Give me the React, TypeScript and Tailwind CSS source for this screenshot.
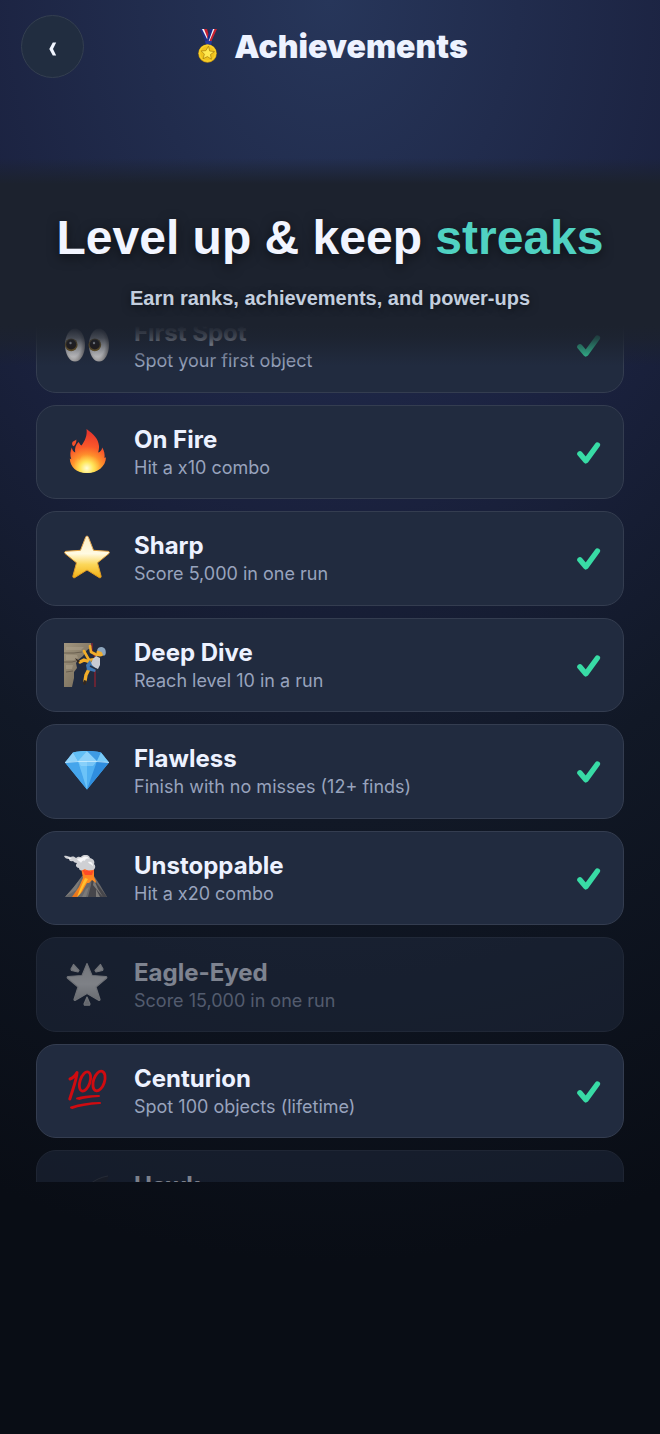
import type { ReactNode } from "react";

function Medal() {
  return (
    <svg viewBox="0 0 34 36" className="h-9 w-[34px]" aria-hidden="true">
      <path d="M8 0h5l7 11-3 3h-3z" fill="#1d2f86" />
      <path d="M10 0h3l5 11-1 3z" fill="#f4f6fb" />
      <path d="M12 0h3l3 10-1 3z" fill="#c9202f" />
      <path d="M24 0h-5l-4 14h3z" fill="#f4f6fb" />
      <path d="M21 0h-3l-3 11 1 3z" fill="#1d2f86" />
      <path d="M25 0h-2.500l-5.500 13h2z" fill="#c9202f" />
      <path d="M13 12h7l-1 4h-5z" fill="#263a9c" />
      <circle cx="15.500" cy="24.500" r="9.300" fill="#c99612" />
      <circle cx="15.500" cy="24.200" r="8.700" fill="#f8d12c" />
      <circle cx="15.500" cy="24.300" r="7.200" fill="#efc21c" />
      <path d="m16.500 17.200 1.200 4.800 4.800.6-4 2.900.9 4.700-4-2.600-4.400 2.200 1.400-4.600-3.300-3.300 4.700-.2z" fill="#ffe850" stroke="#a87c0c" strokeWidth=".7" />
    </svg>
  );
}

function Eyes() {
  return (
    <svg viewBox="0 0 46 46" className="size-full" aria-hidden="true">
      <defs>
        <radialGradient id="eyeWhite" cx=".42" cy=".48" r=".58">
          <stop offset="0" stopColor="#fff" />
          <stop offset=".65" stopColor="#eceae9" />
          <stop offset="1" stopColor="#8b8786" />
        </radialGradient>
      </defs>
      <ellipse cx="11" cy="23" rx="10" ry="16.500" fill="url(#eyeWhite)" />
      <ellipse cx="35" cy="23" rx="10" ry="16.500" fill="url(#eyeWhite)" />
      <circle cx="7.200" cy="22.800" r="6.400" fill="#8c6a22" />
      <circle cx="7.200" cy="22.500" r="5" fill="#23160f" />
      <circle cx="30.800" cy="22.800" r="6.400" fill="#8c6a22" />
      <circle cx="30.800" cy="22.500" r="5" fill="#23160f" />
      <circle cx="6.500" cy="21" r="1.200" fill="#fff" />
      <circle cx="30" cy="21" r="1.200" fill="#fff" />
    </svg>
  );
}

function Fire() {
  return (
    <svg viewBox="0 0 46 46" className="size-full" aria-hidden="true">
      <defs>
        <radialGradient id="flame" gradientUnits="userSpaceOnUse" cx="23" cy="42" r="38">
          <stop offset="0" stopColor="#fff6a0" />
          <stop offset=".2" stopColor="#ffd84a" />
          <stop offset=".42" stopColor="#ff922c" />
          <stop offset=".65" stopColor="#f9582a" />
          <stop offset="1" stopColor="#e8382c" />
        </radialGradient>
        <radialGradient id="flameCore" cx=".5" cy=".8" r=".6">
          <stop offset="0" stopColor="#fffdd8" />
          <stop offset=".45" stopColor="#ffe65a" />
          <stop offset="1" stopColor="#ffab36" stopOpacity="0" />
        </radialGradient>
      </defs>
      <path d="M22.500 0c7 5 12 10 12.500 17 .2 2.500-.4 4.500-.8 6.500 2-.5 3.600-2.200 4-5 2 3 2.800 7 2.300 10.500l1.500-.8c-.2 9.300-8.500 15.800-19 15.800S6 38 5.800 29.500l1.500.8c-1.600-4.300-1-8.300.5-11.800.5 2.500 1.600 4.300 3.400 5-.7-4.500.5-7.500 3.300-10.500 1.200 1.500 1.800 3 3 3.500 3.500-4.500 6-10.500 5-16.500z" fill="url(#flame)" />
      <path d="M12.300 10.500c.5 3-.9 5-2.600 6.800C8 16.500 7.500 14.500 8.700 12.800c1-1 2.500-1.300 3.600-2.300z" fill="#f4502b" />
      <path d="M23 20c1.500 4 3 6 5 8 1-1 2-2.500 2-4 3 3.500 5.500 7 5 11 0 5-5 9-12 9s-12-3.500-12.500-9c0-3 1-5 2.500-7 .8 1.500 1.500 2.500 3 3 .5-4.500 6-7 7-11z" fill="url(#flameCore)" />
    </svg>
  );
}

function Star() {
  return (
    <svg viewBox="0 0 46 46" className="size-full" aria-hidden="true">
      <defs>
        <linearGradient id="starEdge" x1="0" y1="0" x2="0" y2="1">
          <stop offset="0" stopColor="#e2a85c" />
          <stop offset="1" stopColor="#e19a1c" />
        </linearGradient>
        <linearGradient id="starFill" x1="0" y1="0" x2="0" y2="1">
          <stop offset="0" stopColor="#fff0c4" />
          <stop offset=".42" stopColor="#fffae2" />
          <stop offset=".68" stopColor="#fcd75a" />
          <stop offset="1" stopColor="#f2b014" />
        </linearGradient>
      </defs>
      <path d="M21.700 2c.5-1.200 2.100-1.200 2.600 0l5.200 13.300 14.600 1c1.300.1 1.700 1.500.8 2.300L33.500 27.800l3.600 13.300c.3 1.300-.8 2.200-1.900 1.500L23 35l-12.200 7.600c-1.100.7-2.200-.2-1.900-1.500l3.600-13.300L1.100 18.600c-.9-.8-.5-2.200.8-2.300l14.600-1z" fill="url(#starFill)" stroke="url(#starEdge)" strokeLinejoin="round" strokeWidth="1" />
    </svg>
  );
}

function Climber() {
  return (
    <svg viewBox="0 0 46 46" className="size-full" aria-hidden="true">
      <defs>
        <linearGradient id="rock" x1="0" y1="0" x2="1" y2="1">
          <stop offset="0" stopColor="#a2967f" />
          <stop offset="1" stopColor="#6e6453" />
        </linearGradient>
      </defs>
      <path d="M0 1h27l1 4-5 3-4 6-5 4-2 3 1 5-3 4 0 6-2 9H0z" fill="url(#rock)" />
      <path d="M2 5h18l-3 3H2zM2 13h11l1 3-4 2H2zM2 23h7l-1 4H2z" fill="#b0a48e" fillOpacity=".5" />
      <path d="M0 11h10l8-1M0 20h8l4-1M2 30l7-1" stroke="#5f5648" strokeWidth=".8" fill="none" />
      <path d="M28 1v8l3 6M31 27v18" stroke="#8e2330" strokeWidth="1.300" fill="none" />
      <path d="m33 13-6-3-1-6M31 17l-6 1-5-9" stroke="#f2ae29" strokeWidth="2.600" strokeLinecap="round" strokeLinejoin="round" fill="none" />
      <path d="m26 20-6-2-4 2M25 27l-3 6-1 6" stroke="#f2ae29" strokeWidth="3.400" strokeLinejoin="round" strokeLinecap="round" fill="none" />
      <path d="m11 16 5 3-2 2zM20 38l3 1-2 4-2-1z" fill="#33271f" />
      <path d="m32 14 4 2v7l-2 4-7-1-1-3 3-6z" fill="#c8cbd2" />
      <path d="m26 18 2 5 4 4-1 3-8-2-1-5z" fill="#3f78b4" />
      <path d="m26 24 8 4v3" stroke="#273141" strokeWidth="1.500" fill="none" />
      <circle cx="36" cy="11" r="3.600" fill="#f0af31" />
      <path d="M33 8.500c1-5 8-4.500 8.600 0 .6 3 0 5-2 5.500l-2-4z" fill="#8ea6bd" />
    </svg>
  );
}

function Diamond() {
  return (
    <svg viewBox="0 0 46 46" className="size-full" aria-hidden="true">
      <path d="M9 4.500c8-2 20-2 28 0L45 14.500 23 41.500 1 14.500z" fill="#54b2f1" />
      <path d="m9 4.500 5 8.500L1 14.500z" fill="#8ed2fa" />
      <path d="M9 4.500c5-1.200 9-1.400 14-1.500L14 13z" fill="#61bff6" />
      <path d="m23 3 10 10H14z" fill="#8cd1fa" />
      <path d="M23 3c5 .1 9 .3 14 1.500L33 13z" fill="#3e9be4" />
      <path d="m37 4.500 8 10L33 13z" fill="#79cbf9" />
      <path d="m1 14.500 13-1.500 9 28.500z" fill="#45a5ec" />
      <path d="M14 13h9v28.500z" fill="#6cc3f8" />
      <path d="M23 13h10L23 41.500z" fill="#4fb0f2" />
      <path d="m33 13 12 1.500-22 27z" fill="#2f8edf" />
      <path d="m14 13 3 5h12l4-5" fill="#a8e0fd" fillOpacity=".45" />
      <path d="m1 14.500 13-1h19l12 1" stroke="#d8f3ff" strokeWidth=".7" fill="none" />
    </svg>
  );
}

function Volcano() {
  return (
    <svg viewBox="0 0 46 46" className="size-full" aria-hidden="true">
      <defs>
        <linearGradient id="lava" x1="0" y1="0" x2="0" y2="1">
          <stop offset="0" stopColor="#ff6a26" />
          <stop offset=".5" stopColor="#ff8d1f" />
          <stop offset="1" stopColor="#e8741c" />
        </linearGradient>
      </defs>
      <path d="M18 21h12l6 9 7 12H1l8-9z" fill="#68686a" />
      <path d="m28 22 15 20H24l3-12z" fill="#46464b" />
      <path d="m17 23-5 12-11 7 8-9zM30 25l4 9 5 8-10-12z" fill="#7c7a78" />
      <path d="m25 32-3 10h-4l4-8zM32 34l4 8h-4z" fill="#7c7a78" />
      <path d="M17 13c2-4 10-5 13 0l0 9c1 2 2 4 2 6l-4-3-3 3-2 0-5 9-5 5H8l7-10 4-9z" fill="url(#lava)" />
      <path d="m21 23 3 1-4 7-4 8-3 3 3-8z" fill="#ffc02f" />
      <path d="m18 14 4 2 3-4 1 5 4-3-2 6h-7z" fill="#ff4a26" />
      <path d="M0 1c3-1 5 1 7 1 2-1 4 0 5 1 2-2 4-1 5-1 2-3 8-3 9 1 4 1 5 4 4 6 3 3 0 7-3 6-2 1-5 0-6-1-3 2-6 2-6-1-3 0-4-3-2-5-2 0-3-1-4-2-3 1-4-1-4-2-3 0-4-1-5-3z" fill="#cfd0d4" />
      <path d="M13 4c2-1 4-1 5-1 2-2 6-2 7 1-2-1-4 0-4 2-2-1-3 0-4 2-1-2-3-2-4-4zM24 7c3-1 5 1 5 4-2-2-4-2-5-4zM4 2l4 2-3 0z" fill="#f7f7f9" />
    </svg>
  );
}

function GlowingStar() {
  return (
    <svg viewBox="0 0 46 46" className="size-full" aria-hidden="true">
      <defs>
        <linearGradient id="glowFill" gradientUnits="userSpaceOnUse" x1="23" y1="0" x2="23" y2="44">
          <stop offset="0" stopColor="#d6d6d6" />
          <stop offset=".5" stopColor="#efefef" />
          <stop offset="1" stopColor="#b4b4b4" />
        </linearGradient>
      </defs>
      <g fill="url(#glowFill)" stroke="#cfcfcf" strokeLinejoin="round" strokeWidth="1.200">
        <path d="m23 1.500 5 12 14 1c1 .3 1 1.300.4 1.800L32 25l4 12.500c0 .8-.7 1.200-1.400.8L23 31.500l-11.600 6.800c-.7.400-1.400 0-1.400-.8L14 25 3.600 16.300c-.6-.5-.6-1.500.4-1.800l14-1z" />
        <path d="m9.500 2.500 5.500 6-1 1.500-6.500-1.500-.5-1.500z" />
        <path d="m36.500 2.500-5.500 6 1 1.500 6.500-1.500.5-1.500z" />
        <path d="m23 35 3 7-.5 1.200h-5L20 42z" />
      </g>
    </svg>
  );
}

function Hundred() {
  return (
    <svg viewBox="0 0 46 46" className="size-full" aria-hidden="true">
      <g fill="none" stroke="#cf0b10" strokeLinecap="round" strokeLinejoin="round">
        <path d="M6 11c3-1 5-3 7-6.500C12.500 13 8 23 5.800 31" strokeWidth="3" />
        <ellipse cx="21" cy="13.500" rx="5" ry="10" transform="rotate(18 21 13.500)" strokeWidth="2.800" />
        <ellipse cx="35" cy="13" rx="5.500" ry="10.200" transform="rotate(18 35 13)" strokeWidth="2.800" />
        <path d="M13 30.500c6-2 13-2.700 22-2.500-7 .5-14 1-20 3" strokeWidth="1.900" />
        <path d="M7 39.500c9-3 19-4.500 29-4.500-9 .7-20 2-28 5" strokeWidth="2" />
      </g>
    </svg>
  );
}

function Hawk() {
  return (
    <svg viewBox="0 0 46 46" className="size-full" aria-hidden="true">
      <path d="M21 14C28 5 36 2 45 1c-4 9-8 15-15 19l-5 17-9-8-13-3 11-5z" fill="#252a38" />
      <path d="M26 9C31 5 37 2 44 1" stroke="#4c5362" strokeWidth=".7" fill="none" />
    </svg>
  );
}

function Check() {
  return (
    <svg viewBox="0 0 24 24" className="size-6 shrink-0" role="img" aria-label="Unlocked">
      <path d="M2.900 13.800 8.800 20.800 20.400 5" fill="none" stroke="#38dba5" strokeLinecap="round" strokeLinejoin="round" strokeWidth="5.400" />
    </svg>
  );
}

type Achievement = { title: string; detail: string; icon: ReactNode; unlocked: boolean };

const achievements: Achievement[] = [
  { title: "First Spot", detail: "Spot your first object", icon: <Eyes />, unlocked: true },
  { title: "On Fire", detail: "Hit a x10 combo", icon: <Fire />, unlocked: true },
  { title: "Sharp", detail: "Score 5,000 in one run", icon: <Star />, unlocked: true },
  { title: "Deep Dive", detail: "Reach level 10 in a run", icon: <Climber />, unlocked: true },
  { title: "Flawless", detail: "Finish with no misses (12+ finds)", icon: <Diamond />, unlocked: true },
  { title: "Unstoppable", detail: "Hit a x20 combo", icon: <Volcano />, unlocked: true },
  { title: "Eagle-Eyed", detail: "Score 15,000 in one run", icon: <GlowingStar />, unlocked: false },
  { title: "Centurion", detail: "Spot 100 objects (lifetime)", icon: <Hundred />, unlocked: true },
  { title: "Hawk", detail: "", icon: <Hawk />, unlocked: false },
];

function AchievementCard({ title, detail, icon, unlocked }: Achievement) {
  return (
    <li
      className={`flex items-center gap-6 rounded-[20px] border border-[#343d50] bg-[#212b3f] pr-[22px] pl-[27px] ${unlocked ? "" : "opacity-50"}`}
    >
      <div className="size-[46px] shrink-0">{icon}</div>
      <div className="min-w-0 flex-1 pt-1">
        <h3 className="text-2xl leading-7 font-bold text-[#edf2ff]">{title}</h3>
        <p className="min-h-7 text-lg leading-7 text-[#98a3bd]">{detail}</p>
      </div>
      {unlocked && <Check />}
    </li>
  );
}

export default function App() {
  return (
    <div className="flex h-screen flex-col overflow-hidden bg-[#090d15] bg-[radial-gradient(150%_88%_at_50%_0%,#27365a_0%,#1b2240_38%,#111826_65%,#090d15_100%)] pb-[252px] font-['Inter','Liberation_Sans',sans-serif]">
      <header className="flex shrink-0 items-center px-[21px] pt-[15px] pb-4">
        <button
          type="button"
          aria-label="Back"
          className="flex size-[63px] items-center justify-center rounded-full border border-[#343f50] bg-[#212d40] pt-1 text-[#f1f5ff]"
        >
          <svg viewBox="0 0 10 14" className="h-3.5 w-2.5" aria-hidden="true">
            <path d="M4.800.5h3.400L5 7l3.200 6.500H4.800L1.300 7z" fill="currentColor" />
          </svg>
        </button>
        <h1 className="flex flex-1 items-center justify-center gap-2 text-[32px] leading-[42px] font-black text-[#edf2ff]">
          <Medal />
          Achievements
        </h1>
        <div className="w-[63px]" />
      </header>

      <main className="flex min-h-0 flex-1 flex-col pt-16">
        <section className="relative z-10 h-[208px] shrink-0 bg-[linear-gradient(to_bottom,transparent_0px,#1c222e_26px,#1c222e_168px,#1c222ed0_180px,transparent_208px)] pt-[50px] text-center font-['Liberation_Sans',sans-serif] font-bold">
          <h2 className="text-5xl leading-[60px] text-[#f2f5ff] [text-shadow:0_3px_12px_rgba(0,0,0,0.55)]">
            Level up &amp; keep <span className="text-[#50d2c2]">streaks</span>
          </h2>
          <p className="mt-[18px] text-[20px] leading-6 text-[#c3cede] [text-shadow:0_2px_8px_rgba(0,0,0,0.5)]">
            Earn ranks, achievements, and power-ups
          </p>
        </section>

        <div className="-mt-[68px] min-h-0 flex-1 overflow-hidden px-9">
          <ul className="grid min-h-[947px] auto-rows-fr gap-3">
            {achievements.map((item) => (
              <AchievementCard key={item.title} {...item} />
            ))}
          </ul>
        </div>
      </main>
    </div>
  );
}
